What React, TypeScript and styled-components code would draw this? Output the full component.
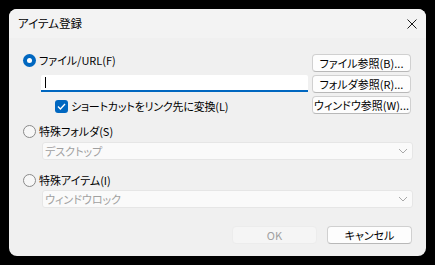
import React from 'react';
import styled, { createGlobalStyle } from 'styled-components';

const GlobalStyle = createGlobalStyle`
    html,
    body {
        margin: 0;
        padding: 0;
        background: #000;
    }
    body {
        font-family: 'Noto Sans CJK JP', 'Noto Sans', sans-serif;
        font-size: 11px;
        font-feature-settings: 'palt';
        color: #000;
    }
`;

const Screen = styled.div`
    padding: 9px;
`;

const Dialog = styled.div`
    width: 417px;
    height: 247px;
    border-radius: 8px;
    overflow: hidden;
    background: #f0f0f0;
    display: flex;
    flex-direction: column;
`;

const TitleBar = styled.div`
    height: 29px;
    flex: none;
    display: flex;
    align-items: center;
    justify-content: space-between;
    padding: 0 9px;
    background: #f3f3f3;
`;

const Title = styled.span`
    font-size: 11.5px;
    line-height: 1;
`;

const CloseIcon = styled.svg`
    width: 10px;
    height: 10px;
`;

const Body = styled.div`
    padding: 15px 13px 0 14px;
    display: flex;
    flex-direction: column;
`;

const TopSection = styled.div`
    display: grid;
    grid-template-columns: 1fr 99px;
    column-gap: 4px;
    margin-right: 2px;
`;

const LeftColumn = styled.div`
    display: flex;
    flex-direction: column;
`;

const RightColumn = styled.div`
    display: flex;
    flex-direction: column;
    gap: 3px;
    padding-top: 1px;
`;

const RadioRow = styled.label<{ $top?: number }>`
    height: 14px;
    display: flex;
    align-items: center;
    gap: 3px;
    margin-top: ${(p) => p.$top ?? 0}px;
    line-height: 1;
`;

const RadioMark = styled.span<{ $checked?: boolean }>`
    width: 13px;
    height: 13px;
    box-sizing: border-box;
    border-radius: 50%;
    flex: none;
    display: flex;
    align-items: center;
    justify-content: center;
    background: ${(p) => (p.$checked ? '#0067c0' : '#f7f7f7')};
    border: ${(p) => (p.$checked ? 'none' : '1px solid #8a8a8a')};

    &::after {
        content: '';
        display: ${(p) => (p.$checked ? 'block' : 'none')};
        width: 5px;
        height: 5px;
        border-radius: 50%;
        background: #fff;
    }
`;

const PathInput = styled.div`
    margin-top: 8px;
    margin-left: 18px;
    height: 17px;
    box-sizing: border-box;
    background: #fff;
    border-bottom: 2px solid #0067c0;
    border-radius: 2px 2px 0 0;
    display: flex;
    align-items: center;
    padding-left: 4px;
`;

const Caret = styled.span`
    width: 1px;
    height: 11px;
    background: #000;
`;

const CheckRow = styled.label`
    margin-top: 8px;
    padding-left: 32px;
    height: 13px;
    display: flex;
    align-items: center;
    gap: 3px;
    line-height: 1;
    letter-spacing: -0.2px;
`;

const CheckMark = styled.span`
    width: 13px;
    height: 13px;
    border-radius: 3px;
    background: #0067c0;
    flex: none;
    display: flex;
    align-items: center;
    justify-content: center;
`;

const Button = styled.button<{ $disabled?: boolean }>`
    height: 18px;
    box-sizing: border-box;
    padding: 0;
    font-family: inherit;
    font-size: 11px;
    font-feature-settings: 'palt';
    line-height: 1;
    border-radius: 4px;
    background: ${(p) => (p.$disabled ? '#f5f5f5' : '#fdfdfd')};
    border: 1px solid ${(p) => (p.$disabled ? '#ececec' : '#d0d0d0')};
    border-bottom-color: ${(p) => (p.$disabled ? '#ececec' : '#b8b8b8')};
    color: ${(p) => (p.$disabled ? '#a0a0a0' : '#000')};
    white-space: nowrap;
`;

const Combo = styled.div<{ $top: number }>`
    margin-top: ${(p) => p.$top}px;
    margin-left: 19px;
    height: 18px;
    box-sizing: border-box;
    background: #fafafa;
    border: 1px solid #e6e6e6;
    border-radius: 3px;
    display: flex;
    align-items: center;
    justify-content: space-between;
    padding: 0 4px 0 2px;
    color: #a0a0a0;
    line-height: 1;
`;

const Chevron = styled.svg`
    width: 10px;
    height: 6px;
`;

const Footer = styled.div`
    margin-top: 18px;
    display: flex;
    justify-content: flex-end;
    gap: 10px;
    padding-right: 1px;

    & > button {
        width: 85px;
    }
`;

const Radio = ({ checked, label, top }: { checked?: boolean; label: string; top?: number }) => (
    <RadioRow $top={top}>
        <RadioMark $checked={checked} />
        <span>{label}</span>
    </RadioRow>
);

const ComboBox = ({ value, top }: { value: string; top: number }) => (
    <Combo $top={top}>
        <span>{value}</span>
        <Chevron viewBox="0 0 10 6">
            <path d="M1 1 L5 5 L9 1" fill="none" stroke="#a8a8a8" strokeWidth="1" />
        </Chevron>
    </Combo>
);

export default function App() {
    return (
        <Screen>
            <GlobalStyle />
            <Dialog>
                <TitleBar>
                    <Title>アイテム登録</Title>
                    <CloseIcon viewBox="0 0 10 10">
                        <path d="M0.5 0.5 L9.5 9.5 M9.5 0.5 L0.5 9.5" stroke="#1a1a1a" strokeWidth="1" />
                    </CloseIcon>
                </TitleBar>
                <Body>
                    <TopSection>
                        <LeftColumn>
                            <Radio checked label="ファイル/URL(F)" />
                            <PathInput>
                                <Caret />
                            </PathInput>
                            <CheckRow>
                                <CheckMark>
                                    <svg width="9" height="7" viewBox="0 0 9 7">
                                        <path d="M1 3.5 L3.4 6 L8 1" fill="none" stroke="#fff" strokeWidth="1.3" />
                                    </svg>
                                </CheckMark>
                                <span>ショートカットをリンク先に変換(L)</span>
                            </CheckRow>
                        </LeftColumn>
                        <RightColumn>
                            <Button>ファイル参照(B)...</Button>
                            <Button>フォルダ参照(R)...</Button>
                            <Button>ウィンドウ参照(W)...</Button>
                        </RightColumn>
                    </TopSection>
                    <Radio label="特殊フォルダ(S)" top={10} />
                    <ComboBox value="デスクトップ" top={4} />
                    <Radio label="特殊アイテム(I)" top={13} />
                    <ComboBox value="ウィンドウロック" top={3} />
                    <Footer>
                        <Button $disabled>OK</Button>
                        <Button>キャンセル</Button>
                    </Footer>
                </Body>
            </Dialog>
        </Screen>
    );
}
